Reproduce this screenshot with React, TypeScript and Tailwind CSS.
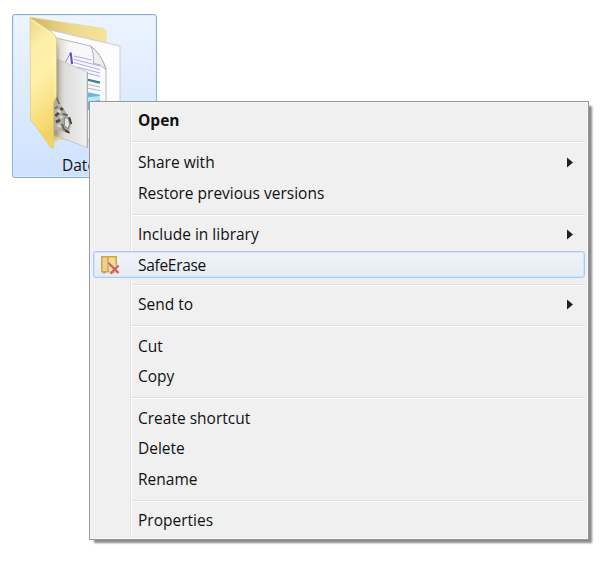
type Entry = {
  label?: string;
  height: string;
  bold?: boolean;
  submenu?: boolean;
  selected?: boolean;
};

const entries: Entry[] = [
  { label: "Open", height: "h-[31px]", bold: true },
  { height: "h-[11px]" },
  { label: "Share with", height: "h-[31px]", submenu: true },
  { label: "Restore previous versions", height: "h-[31px]" },
  { height: "h-[10px]" },
  { label: "Include in library", height: "h-[31px]", submenu: true },
  { label: "SafeErase", height: "h-[29px]", selected: true },
  { height: "h-[10px]" },
  { label: "Send to", height: "h-[31px]", submenu: true },
  { height: "h-[11px]" },
  { label: "Cut", height: "h-[31px]" },
  { label: "Copy", height: "h-[30px]" },
  { height: "h-[11px]" },
  { label: "Create shortcut", height: "h-[31px]" },
  { label: "Delete", height: "h-[30px]" },
  { label: "Rename", height: "h-[31px]" },
  { height: "h-[11px]" },
  { label: "Properties", height: "h-[30px]" },
];

function FolderIcon() {
  return (
    <svg className="block h-[141px] w-[143px]" viewBox="39 45 429 423">
      <defs>
        <linearGradient id="front" x1="0" y1="0" x2="0.2" y2="1">
          <stop offset="0" stopColor="#ecd583" />
          <stop offset="0.25" stopColor="#fbeea6" />
          <stop offset="0.5" stopColor="#fff1aa" />
          <stop offset="0.75" stopColor="#f9e387" />
          <stop offset="1" stopColor="#f4d25f" />
        </linearGradient>
        <linearGradient id="back" x1="0" y1="0" x2="1" y2="0.3">
          <stop offset="0" stopColor="#cdb55c" />
          <stop offset="0.5" stopColor="#ecd88b" />
          <stop offset="1" stopColor="#f6e59c" />
        </linearGradient>
        <linearGradient id="sheet" x1="0" y1="0" x2="1" y2="0">
          <stop offset="0" stopColor="#aaa59b" />
          <stop offset="0.35" stopColor="#dedddb" />
          <stop offset="1" stopColor="#f0f0f1" />
        </linearGradient>
        <linearGradient id="page" x1="0" y1="0" x2="1" y2="0">
          <stop offset="0" stopColor="#d0cbc0" />
          <stop offset="0.3" stopColor="#f6f6f9" />
          <stop offset="1" stopColor="#fbfbfe" />
        </linearGradient>
        <filter id="shade" x="-100%" y="-20%" width="300%" height="140%">
          <feGaussianBlur stdDeviation="5" />
        </filter>
      </defs>
      <path d="M92 52 L308 85 Q320 88 320 100 L320 420 L150 420 Z" fill="url(#back)" />
      <path d="M92 52 L308 85 Q318 88 319 98" fill="none" stroke="#ecd98e" strokeWidth="2" />
      <path d="M150 90 L360 138 L360 440 L150 400 Z" fill="#fdfdfd" stroke="#ccccd0" strokeWidth="3" />
      <path d="M160 112 L272 138 Q300 158 318 205 L318 430 L160 390 Z" fill="url(#page)" stroke="#b9b9c1" strokeWidth="3" />
      <path d="M272 138 Q283 160 280 190 Q300 190 318 208 Q304 162 272 138Z" fill="#eeeef2" stroke="#b0b0b8" strokeWidth="3" />
      <path d="M196 187 L212 157 L217 192" fill="none" stroke="#8a84dc" strokeWidth="3" />
      <path d="M212 158 L216 192" stroke="#5b52c8" strokeWidth="6" />
      <path
        d="M222 168 L275 180 M222 178 L300 198 M222 188 L300 209 M230 201 L300 219 M248 216 L300 229"
        stroke="#b0aaef"
        strokeWidth="3"
      />
      <path d="M258 238 L300 248" stroke="#3f8484" strokeWidth="7" />
      <path d="M262 253 L300 261 M262 264 L300 272" stroke="#a9b7ca" strokeWidth="3" />
      <path d="M260 276 L300 284 V330 H260Z" fill="#6ab4e5" />
      <path d="M262 292 L300 288 V300 L262 306Z" fill="#b9e6fa" />
      <path d="M158 172 L262 216 V443 L158 404 Z" fill="url(#sheet)" stroke="#b8b8b8" strokeWidth="2" />
      <path d="M262 216 V443" stroke="#a8a8ac" strokeWidth="3" />
      <path d="M166 115 L176 150 V400 L162 430Z" fill="#6d6246" opacity="0.35" filter="url(#shade)" />
      {/* engine photo on the front sheet */}
      <g fill="none">
        <path d="M163 280 L176 312 L190 324 L206 352 L213 374 L206 400 L163 388Z" fill="#b2aea4" />
        <path d="M166 280 L173 302 M172 300 L178 312 M164 325 L174 320" stroke="#6d685c" strokeWidth="5" />
        <path d="M166 348 L177 338 M181 324 L189 330 M168 366 L180 360" stroke="#4b4840" strokeWidth="8" />
        <path d="M173 330 L181 338 M180 352 L188 350 M172 376 L184 380" stroke="#d9d8d2" strokeWidth="7" />
        <path d="M188 342 L203 346 M186 372 L192 388 L204 394" stroke="#66625a" strokeWidth="6" />
        <path d="M193 354 L205 354 L209 374 L203 386 L193 376Z" fill="#dbe8e8" stroke="#7c7d77" strokeWidth="3" />
        <path d="M208 352 L214 372 M196 393 L209 398" stroke="#35332d" strokeWidth="5" />
      </g>
      <path
        d="M90 52 L158 98 Q168 106 169 120 V294 Q161 300 161 310 V444 Q157 450 151 440 L92 359 Z"
        fill="url(#front)"
        stroke="#dcc57a"
        strokeWidth="2"
      />
      <path d="M94 60 L156 103 Q164 109 165 121 V290" fill="none" stroke="#fff6c5" strokeWidth="3" />
    </svg>
  );
}

function EraseIcon() {
  return (
    <svg className="block h-[20px] w-[20px]" viewBox="0 0 20 20">
      <path d="M1 1H17V17.5H14.5L14 18.5H11L10.5 17.5H6L5.5 18.5H3L2.5 17.5H1Z" fill="#c9a458" />
      <path d="M2.5 2.5H7.5V16H2.5Z" fill="#ecd389" />
      <path d="M8.5 2.5H15.5V16H8.5Z" fill="#f1dc8c" />
      <path d="M8 2V16" stroke="#cda853" />
      <path d="M9 8.5L18.5 18M18.5 10.5L10 18.5" stroke="#f3ded5" strokeWidth="3.6" />
      <path d="M8.5 8L18.5 18M18.5 10.5L10.5 18.5" stroke="#cf5f57" strokeWidth="2.3" />
    </svg>
  );
}

function Row({ entry }: { entry: Entry }) {
  return (
    <div className={`flex py-px ${entry.height}`}>
      <div
        className={`flex flex-1 items-center rounded-[3px] border pr-[11px] ${
          entry.selected
            ? "border-[#a9cbf6] bg-linear-to-b from-[#f1f3f6]/90 to-[#e4ebf6]/90 shadow-[inset_0_0_0_1px_#d3e3f8]"
            : "border-transparent"
        }`}
      >
        <div className="w-[44px] shrink-0 pl-[6px]">{entry.selected && <EraseIcon />}</div>
        <span
          className={`flex-1 whitespace-nowrap ${entry.bold ? "font-bold" : ""} ${
            entry.selected ? "tracking-[-0.3px]" : "pb-[2px]"
          }`}
        >
          {entry.label}
        </span>
        {entry.submenu && (
          <svg className="mb-px h-[11px] w-[6px]" viewBox="0 0 6 11">
            <path d="M0 0.5L6 5.5L0 10.5Z" fill="#222" />
          </svg>
        )}
      </div>
    </div>
  );
}

function ContextMenu() {
  return (
    <div className="absolute top-[101px] left-[89px] h-[439px] w-[500px] border border-[#979797] bg-[#f0f0f0] p-[3px] shadow-[4px_4px_2px_-1px_#8a8a8a,inset_0_0_0_1px_#f6f6f6]">
      <div className="flex h-full flex-col bg-[linear-gradient(90deg,#f0f0f0_37px,#e2e3e3_37px,#e2e3e3_38px,#fcfcfc_38px,#fcfcfc_39px,#f0f0f0_39px)]">
        {entries.map((entry, index) =>
          entry.label ? (
            <Row key={index} entry={entry} />
          ) : (
            <div key={index} className={`flex items-center pt-px pl-[39px] ${entry.height}`}>
              <div className="h-[2px] w-full border-t border-[#e0e0e0] bg-[#fdfdfd]" />
            </div>
          )
        )}
      </div>
    </div>
  );
}

export default function App() {
  return (
    <div className="relative h-[568px] w-[616px] overflow-hidden bg-white pt-[14px] pl-[12px] font-['Open_Sans',sans-serif] text-[15.5px] leading-[20px] text-[#111]">
      <div className="flex h-[164px] w-[145px] flex-col rounded-[3px] border border-[#84aee2] bg-linear-to-b from-[#edf4fe] to-[#cee2fe] shadow-[inset_0_0_0_1px_#dceaff]">
        <FolderIcon />
        <span className="-mt-px pl-[49px]">Date</span>
      </div>
      <ContextMenu />
    </div>
  );
}
